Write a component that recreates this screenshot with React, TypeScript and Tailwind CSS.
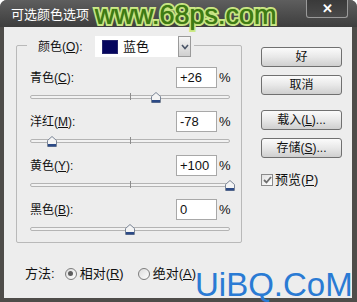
import React from 'react'

const FONT = "font-['Liberation_Sans','Noto_Sans_CJK_SC',sans-serif]"

const rows = [
  { name: '青色', key: 'C', value: '+26', v: 26 },
  { name: '洋红', key: 'M', value: '-78', v: -78 },
  { name: '黄色', key: 'Y', value: '+100', v: 100 },
  { name: '黑色', key: 'B', value: '0', v: 0 },
]

function Thumb() {
  return (
    <svg width="10" height="11" viewBox="0 0 10 11">
      <path d="M0.5 10.5 V4.5 L5 0.5 L9.5 4.5 V10.5 Z" fill="#f4f4f4" stroke="#7a8596" />
      <rect x="1" y="8" width="8" height="2.5" fill="#2c4a86" />
    </svg>
  )
}

function Slider({ v }: { v: number }) {
  return (
    <div className="relative h-[23px] ml-[13px] w-[200px]">
      <div className="absolute left-0 right-0 top-[7px] h-[4px] rounded-full border border-[#b4b4b4] bg-[#f2f2f2]" />
      <div className="absolute left-[100px] top-[5px] h-[7px] w-px bg-[#8c8c8c]" />
      <div className="absolute top-[4px]" style={{ left: 95 + v }}>
        <Thumb />
      </div>
    </div>
  )
}

function Btn({ children }: { children: React.ReactNode }) {
  return (
    <div className="h-[20px] w-[81px] rounded-[3px] border border-[#707070] bg-gradient-to-b from-[#fbfbfb] via-[#e8e8e8] to-[#cfcfcf] flex items-center justify-center text-[12px] leading-none text-[#111]">
      {children}
    </div>
  )
}

function Radio({ on }: { on?: boolean }) {
  return (
    <div className="w-[12px] h-[12px] rounded-full border border-[#7d7d7d] bg-gradient-to-br from-[#dcdcdc] to-white flex items-center justify-center">
      {on && <div className="w-[5px] h-[5px] rounded-full bg-[#5e5e5e]" />}
    </div>
  )
}

export default function App() {
  return (
    <div className={`relative w-[357px] h-[302px] overflow-hidden bg-white ${FONT}`}>
      <div className="h-full flex flex-col bg-[#4e4c49] rounded-t-[7px]">
        {/* title bar */}
        <div className="h-[27px] flex items-start bg-gradient-to-b from-[#5e5e5e] to-[#3e3e3e] rounded-t-[7px]">
          <div className="pl-[11px] pt-[6px] text-[13px] leading-[18px] text-white">可选颜色选项</div>
          <div className="ml-auto mr-[9px] h-[18px] w-[42px] border-x border-b border-[#9a9a9a] rounded-b-[3px] bg-gradient-to-b from-[#3a3a3a] to-[#4a4a4a] flex items-center justify-center text-white text-[13px] font-bold leading-none">
            ✕
          </div>
        </div>

        {/* body */}
        <div className="flex-1 ml-[4px] mr-[5px] mb-[4px] bg-[#ededed] flex flex-col text-[12px] text-[#111]">
          <div className="flex">
            <div className="pl-[12px] pt-[18px]">
              <div className="relative w-[226px] h-[198px] border border-[#b9b9b9] rounded-[2px]">
                {/* legend */}
                <div className="absolute -top-[10px] left-[10px] flex items-center bg-[#ededed] pl-[11px] pr-[3px] h-[21px]">
                  <span className="w-[57px] leading-none">
                    颜色(<span className="underline">O</span>):
                  </span>
                  <div className="flex h-[21px]">
                    <div className="w-[83px] bg-white flex items-center pl-[7px] gap-[5px]">
                      <div className="w-[16px] h-[14px] bg-[#06065e] border border-[#26266e]" />
                      <span className="text-[13px] leading-none">蓝色</span>
                    </div>
                    <div className="w-[13px] border border-[#9a9a9a] bg-gradient-to-b from-[#f6f6f6] to-[#cfcfcf] flex items-center justify-center">
                      <svg width="8" height="6" viewBox="0 0 8 6">
                        <path d="M1 1 L4 4.5 L7 1" fill="none" stroke="#4a5568" strokeWidth="1.6" />
                      </svg>
                    </div>
                  </div>
                </div>

                <div className="pt-[21px]">
                  {rows.map((r) => (
                    <div key={r.key}>
                      <div className="flex items-center h-[21px]">
                        <span className="w-[159px] pl-[13px] leading-none">
                          {r.name}(<span className="underline">{r.key}</span>):
                        </span>
                        <div className="w-[41px] h-[21px] bg-white border border-[#a8a8a8] flex items-center pl-[3px] text-[13px] leading-none">
                          {r.value}
                        </div>
                        <span className="ml-[2px] text-[13px] leading-none">%</span>
                      </div>
                      <Slider v={r.v} />
                    </div>
                  ))}
                </div>
              </div>
            </div>

            <div className="ml-[19px] pt-[20px] flex flex-col">
              <Btn>好</Btn>
              <div className="mt-[8px]">
                <Btn>取消</Btn>
              </div>
              <div className="mt-[15px]">
                <Btn>
                  载入(<span className="underline">L</span>)...
                </Btn>
              </div>
              <div className="mt-[8px]">
                <Btn>
                  存储(<span className="underline">S</span>)...
                </Btn>
              </div>
              <div className="mt-[15px] flex items-center gap-[2px]">
                <div className="w-[12px] h-[12px] border border-[#8a8a8a] bg-gradient-to-br from-[#e2e2e2] to-white flex items-center justify-center">
                  <svg width="9" height="8" viewBox="0 0 9 8">
                    <path d="M1 4 L3.5 6.5 L8 1" fill="none" stroke="#6e6e6e" strokeWidth="1.8" />
                  </svg>
                </div>
                <span className="text-[13px] leading-none">
                  预览(<span className="underline">P</span>)
                </span>
              </div>
            </div>
          </div>

          {/* method */}
          <div className="flex items-center mt-[24px] pl-[21px] text-[13px] leading-none">
            <span>方法:</span>
            <div className="ml-[10px]">
              <Radio on />
            </div>
            <span className="ml-[3px]">
              相对(<span className="underline">R</span>)
            </span>
            <div className="ml-[14px]">
              <Radio />
            </div>
            <span className="ml-[3px]">
              绝对(<span className="underline">A</span>)
            </span>
          </div>
        </div>
      </div>

      {/* watermarks */}
      <div className="absolute left-[95px] top-0 font-['Liberation_Sans',sans-serif] text-[27px] leading-[31px] text-[#3d7c12] [paint-order:stroke_fill] [-webkit-text-stroke:4px_#cdea86] [text-shadow:0_0_1px_#3a5a18]">
        www.68ps.com
      </div>
      <div className="absolute left-[195px] top-[268px] font-['Liberation_Sans',sans-serif] text-[33px] leading-[34px] text-[#2a7bd4]">
        UiBQ.CoM
      </div>
    </div>
  )
}
